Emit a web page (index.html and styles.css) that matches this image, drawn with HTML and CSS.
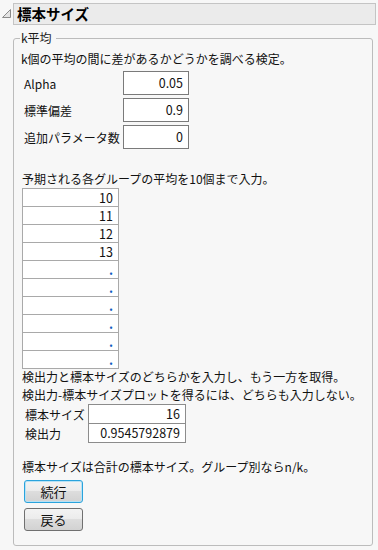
FILE: index.html
```html
<!DOCTYPE html>
<html lang="ja">
<head>
<meta charset="utf-8">
<link rel="stylesheet" href="styles.css">
</head>
<body>
<div class="header">
  <svg class="toggle" width="13" height="22" viewBox="0 0 13 22"><polygon points="10.5,6.5 10.5,14.5 2.5,14.5" fill="#e4e4e4" stroke="#8a8a8a" stroke-width="1"/></svg>
  <div class="titlebar">標本サイズ</div>
</div>
<fieldset class="group">
  <legend class="legend">k平均</legend>
  <div class="desc">k個の平均の間に差があるかどうかを調べる検定。</div>
  <div class="params">
    <div class="label">Alpha</div><div class="field">0.05</div>
    <div class="label">標準偏差</div><div class="field">0.9</div>
    <div class="label">追加パラメータ数</div><div class="field">0</div>
  </div>
  <div class="prompt">予期される各グループの平均を10個まで入力。</div>
  <div class="list">
    <div class="cell">10</div>
    <div class="cell">11</div>
    <div class="cell">12</div>
    <div class="cell">13</div>
    <div class="cell missing">.</div>
    <div class="cell missing">.</div>
    <div class="cell missing">.</div>
    <div class="cell missing">.</div>
    <div class="cell missing">.</div>
    <div class="cell missing">.</div>
  </div>
  <div class="note">検出力と標本サイズのどちらかを入力し、もう一方を取得。<br>検出力-標本サイズプロットを得るには、どちらも入力しない。</div>
  <div class="sample">
    <div class="label">標本サイズ</div><div class="sfield">16</div>
    <div class="label">検出力</div><div class="sfield second">0.9545792879</div>
  </div>
  <div class="footnote">標本サイズは合計の標本サイズ。グループ別ならn/k。</div>
  <div class="buttons">
    <button class="btn focused">続行</button>
    <button class="btn">戻る</button>
  </div>
</fieldset>
</body>
</html>
```
FILE: styles.css
```css
html, body {
  margin: 0;
  padding: 0;
  background: #f7f7f7;
}
body {
  font-family: "Noto Sans CJK JP", "Noto Sans", sans-serif;
  font-size: 12px;
  color: #111;
  width: 378px;
}
.header {
  display: flex;
  align-items: flex-start;
  padding-top: 3px;
}
.toggle {
  flex: none;
  display: block;
}
.titlebar {
  flex: 1;
  margin-right: 2px;
  height: 20px;
  line-height: 20px;
  border: 1px solid #c4c4c4;
  background: #ebebeb;
  font-weight: bold;
  font-size: 14.5px;
  padding-left: 3px;
  color: #000;
}
.group {
  margin: 6px 5px 0 13px;
  border: 1px solid #bcbcbc;
  border-radius: 3px;
  padding: 0 6px 14px 6px;
  min-width: 0;
}
.legend {
  padding: 0 4px 0 1px;
  line-height: 14px;
  font-size: 12px;
  color: #1a1a1a;
}
.desc {
  margin: 5px 0 0 1px;
  line-height: 18px;
}
.params {
  display: grid;
  grid-template-columns: 99px 66px;
  row-gap: 3px;
  padding-left: 4px;
  margin-top: 3px;
  align-items: center;
}
.field {
  box-sizing: border-box;
  height: 24px;
  line-height: 22px;
  border: 1px solid #7a7a7a;
  background: #fff;
  text-align: right;
  padding-right: 5px;
  font-size: 12.5px;
}
.prompt {
  margin: 21px 0 0 2px;
  line-height: 18px;
}
.list {
  margin-left: 2px;
  width: 97px;
  box-sizing: border-box;
  border: 1px solid #a9a9a9;
  background: #fff;
}
.cell {
  height: 17px;
  line-height: 17px;
  text-align: right;
  padding-right: 5px;
  font-size: 12.5px;
  border-top: 1px solid #a9a9a9;
}
.cell:first-child {
  border-top: none;
}
.missing {
  color: #1060c0;
  font-weight: bold;
}
.note {
  margin: -1px 0 0 2px;
  line-height: 18px;
}
.sample {
  display: grid;
  grid-template-columns: 63px 98px;
  padding-left: 5px;
  align-items: center;
}
.sfield {
  box-sizing: border-box;
  height: 20px;
  line-height: 18px;
  border: 1px solid #8c8c8c;
  background: #fff;
  text-align: right;
  padding-right: 5px;
  font-size: 12.5px;
}
.sfield.second {
  margin-top: -1px;
}
.footnote {
  margin: 15px 0 0 2px;
  line-height: 18px;
}
.buttons {
  display: flex;
  flex-direction: column;
  align-items: flex-start;
  gap: 5px;
  margin: 4px 0 0 4px;
}
.btn {
  box-sizing: border-box;
  width: 59px;
  height: 23px;
  padding: 0;
  border: 1px solid #707070;
  border-radius: 3px;
  background: linear-gradient(#f3f3f3, #ebebeb 50%, #dddddd 50%, #d2d2d2);
  font-family: "Noto Sans CJK JP", sans-serif;
  font-size: 13px;
  line-height: 21px;
  color: #111;
}
.btn.focused {
  border-color: #2aa3dc;
  box-shadow: inset 0 0 0 1px #b8e2f5;
}
```
